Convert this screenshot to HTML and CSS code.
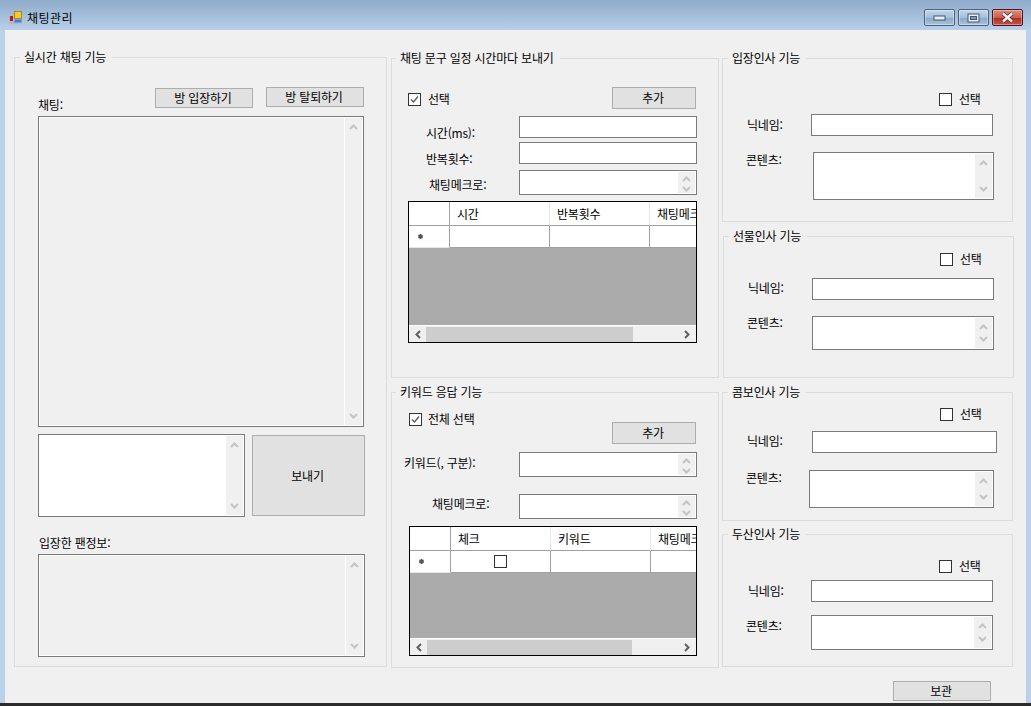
FILE: index.html
```html
<!DOCTYPE html>
<html lang="ko">
<head>
    <meta charset="UTF-8">
    <title>채팅관리</title>
    <link rel="stylesheet" href="styles.css">
</head>
<body>
<div class="window">
    <div class="titlebar">
        <svg class="app-icon" width="13" height="13" viewBox="0 0 13 13">
            <rect x="0" y="3" width="13" height="10" fill="#b4b9c4"/>
            <rect x="1" y="5" width="3" height="5" fill="#b0201c"/>
            <rect x="5" y="0" width="8" height="8" fill="#a88b20"/>
            <rect x="6" y="1" width="6" height="6" fill="#f6c92e"/>
            <rect x="5" y="8" width="8" height="4" fill="#7f9fd0"/>
            <rect x="6" y="9" width="6" height="2" fill="#3d7fe0"/>
        </svg>
        <span class="title">채팅관리</span>
        <div class="win-buttons">
            <div class="win-btn">
                <svg width="13" height="6" viewBox="0 0 13 6"><rect x="1" y="1" width="11" height="4" fill="#e8eef5" stroke="#46566c"/></svg>
            </div>
            <div class="win-btn">
                <svg width="13" height="10" viewBox="0 0 13 10"><rect x="1" y="1" width="11" height="8" fill="#e8eef5" stroke="#46566c"/><rect x="3.5" y="3.5" width="6" height="3" fill="#7f9ab8" stroke="#46566c"/></svg>
            </div>
            <div class="win-btn win-close">
                <svg width="15" height="11" viewBox="0 0 15 11"><path d="M3 1.5L12 9.5M12 1.5L3 9.5" stroke="#5a2a2a" stroke-width="4"/><path d="M3 1.5L12 9.5M12 1.5L3 9.5" stroke="#f2f2f2" stroke-width="2.4"/></svg>
            </div>
        </div>
    </div>

    <div class="client">
        <!-- 왼쪽: 실시간 채팅 -->
        <div class="col col-left">
            <section class="group group-chat">
                <span class="legend">실시간 채팅 기능</span>
                <div class="chat-head">
                    <label class="chat-label">채팅:</label>
                    <button class="btn btn-enter">방 입장하기</button>
                    <button class="btn btn-leave">방 탈퇴하기</button>
                </div>
                <div class="box off chat-log">
                    <div class="fill"></div>
                    <div class="vbar">
                        <svg width="9" height="6" viewBox="0 0 9 6"><path d="M1 5L4.5 1.5L8 5"/></svg>
                        <svg width="9" height="6" viewBox="0 0 9 6"><path d="M1 1L4.5 4.5L8 1"/></svg>
                    </div>
                </div>
                <div class="chat-send">
                    <div class="box chat-input">
                        <div class="fill"></div>
                        <div class="vbar">
                            <svg width="9" height="6" viewBox="0 0 9 6"><path d="M1 5L4.5 1.5L8 5"/></svg>
                            <svg width="9" height="6" viewBox="0 0 9 6"><path d="M1 1L4.5 4.5L8 1"/></svg>
                        </div>
                    </div>
                    <button class="btn btn-send">보내기</button>
                </div>
                <label class="fan-label">입장한 팬정보:</label>
                <div class="box off fan-log">
                    <div class="fill"></div>
                    <div class="vbar">
                        <svg width="9" height="6" viewBox="0 0 9 6"><path d="M1 5L4.5 1.5L8 5"/></svg>
                        <svg width="9" height="6" viewBox="0 0 9 6"><path d="M1 1L4.5 4.5L8 1"/></svg>
                    </div>
                </div>
            </section>
        </div>

        <!-- 가운데: 매크로 / 키워드 -->
        <div class="col col-mid">
            <section class="group group-timer">
                <span class="legend">채팅 문구 일정 시간마다 보내기</span>
                <div class="top-row">
                    <div class="check-field"><span class="check"><svg width="11" height="11" viewBox="0 0 11 11"><path d="M2 5.5L4.5 8L9 2.5"/></svg></span>선택</div>
                    <button class="btn btn-add">추가</button>
                </div>
                <div class="field f-time">
                    <label>시간(ms):</label>
                    <input class="ctl" type="text">
                </div>
                <div class="field f-repeat">
                    <label>반복횟수:</label>
                    <input class="ctl" type="text">
                </div>
                <div class="field f-macro">
                    <label>채팅메크로:</label>
                    <div class="box ctl">
                        <div class="fill"></div>
                        <div class="vbar mini">
                            <svg width="9" height="6" viewBox="0 0 9 6"><path d="M1 5L4.5 1.5L8 5"/></svg>
                            <svg width="9" height="6" viewBox="0 0 9 6"><path d="M1 1L4.5 4.5L8 1"/></svg>
                        </div>
                    </div>
                </div>
                <div class="datagrid grid-timer">
                    <table>
                        <tr class="head"><th></th><th>시간</th><th>반복횟수</th><th>채팅메크로</th></tr>
                        <tr><td class="row-head"><svg width="7" height="7" viewBox="0 0 7 7"><circle cx="3.5" cy="3.5" r="2.2"/><path d="M3.5 1V6M1.3 2.2L5.7 4.8M1.3 4.8L5.7 2.2"/></svg></td><td></td><td></td><td></td></tr>
                    </table>
                    <div class="grid-empty"></div>
                    <div class="hbar">
                        <svg width="9" height="9" viewBox="0 0 9 9"><path d="M6 1L2.5 4.5L6 8"/></svg>
                        <div class="thumb thumb-timer"></div>
                        <svg width="9" height="9" viewBox="0 0 9 9"><path d="M3 1L6.5 4.5L3 8"/></svg>
                    </div>
                </div>
            </section>

            <section class="group group-keyword">
                <span class="legend">키워드 응답 기능</span>
                <div class="top-row">
                    <div class="check-field"><span class="check"><svg width="11" height="11" viewBox="0 0 11 11"><path d="M2 5.5L4.5 8L9 2.5"/></svg></span>전체 선택</div>
                    <button class="btn btn-add">추가</button>
                </div>
                <div class="field f-keyword">
                    <label>키워드(, 구분):</label>
                    <div class="box ctl">
                        <div class="fill"></div>
                        <div class="vbar mini">
                            <svg width="9" height="6" viewBox="0 0 9 6"><path d="M1 5L4.5 1.5L8 5"/></svg>
                            <svg width="9" height="6" viewBox="0 0 9 6"><path d="M1 1L4.5 4.5L8 1"/></svg>
                        </div>
                    </div>
                </div>
                <div class="field f-kmacro">
                    <label>채팅메크로:</label>
                    <div class="box ctl">
                        <div class="fill"></div>
                        <div class="vbar mini">
                            <svg width="9" height="6" viewBox="0 0 9 6"><path d="M1 5L4.5 1.5L8 5"/></svg>
                            <svg width="9" height="6" viewBox="0 0 9 6"><path d="M1 1L4.5 4.5L8 1"/></svg>
                        </div>
                    </div>
                </div>
                <div class="datagrid grid-keyword">
                    <table>
                        <tr class="head"><th></th><th>체크</th><th>키워드</th><th>채팅메크로</th></tr>
                        <tr><td class="row-head"><svg width="7" height="7" viewBox="0 0 7 7"><circle cx="3.5" cy="3.5" r="2.2"/><path d="M3.5 1V6M1.3 2.2L5.7 4.8M1.3 4.8L5.7 2.2"/></svg></td><td class="center"><span class="check cell-check"></span></td><td></td><td></td></tr>
                    </table>
                    <div class="grid-empty"></div>
                    <div class="hbar">
                        <svg width="9" height="9" viewBox="0 0 9 9"><path d="M6 1L2.5 4.5L6 8"/></svg>
                        <div class="thumb thumb-keyword"></div>
                        <svg width="9" height="9" viewBox="0 0 9 9"><path d="M3 1L6.5 4.5L3 8"/></svg>
                    </div>
                </div>
            </section>
        </div>

        <!-- 오른쪽: 인사 기능 -->
        <div class="col col-right">
            <section class="group greet greet-enter">
                <span class="legend">입장인사 기능</span>
                <div class="check-field greet-check"><span class="check"></span>선택</div>
                <div class="field f-nick">
                    <label>닉네임:</label>
                    <input class="ctl" type="text">
                </div>
                <div class="field f-body">
                    <label>콘텐츠:</label>
                    <div class="box ctl">
                        <div class="fill"></div>
                        <div class="vbar">
                            <svg width="9" height="6" viewBox="0 0 9 6"><path d="M1 5L4.5 1.5L8 5"/></svg>
                            <svg width="9" height="6" viewBox="0 0 9 6"><path d="M1 1L4.5 4.5L8 1"/></svg>
                        </div>
                    </div>
                </div>
            </section>

            <section class="group greet greet-gift">
                <span class="legend">선물인사 기능</span>
                <div class="check-field greet-check"><span class="check"></span>선택</div>
                <div class="field f-nick">
                    <label>닉네임:</label>
                    <input class="ctl" type="text">
                </div>
                <div class="field f-body">
                    <label>콘텐츠:</label>
                    <div class="box ctl">
                        <div class="fill"></div>
                        <div class="vbar">
                            <svg width="9" height="6" viewBox="0 0 9 6"><path d="M1 5L4.5 1.5L8 5"/></svg>
                            <svg width="9" height="6" viewBox="0 0 9 6"><path d="M1 1L4.5 4.5L8 1"/></svg>
                        </div>
                    </div>
                </div>
            </section>

            <section class="group greet greet-combo">
                <span class="legend">콤보인사 기능</span>
                <div class="check-field greet-check"><span class="check"></span>선택</div>
                <div class="field f-nick">
                    <label>닉네임:</label>
                    <input class="ctl" type="text">
                </div>
                <div class="field f-body">
                    <label>콘텐츠:</label>
                    <div class="box ctl">
                        <div class="fill"></div>
                        <div class="vbar">
                            <svg width="9" height="6" viewBox="0 0 9 6"><path d="M1 5L4.5 1.5L8 5"/></svg>
                            <svg width="9" height="6" viewBox="0 0 9 6"><path d="M1 1L4.5 4.5L8 1"/></svg>
                        </div>
                    </div>
                </div>
            </section>

            <section class="group greet greet-doosan">
                <span class="legend">두산인사 기능</span>
                <div class="check-field greet-check"><span class="check"></span>선택</div>
                <div class="field f-nick">
                    <label>닉네임:</label>
                    <input class="ctl" type="text">
                </div>
                <div class="field f-body">
                    <label>콘텐츠:</label>
                    <div class="box ctl">
                        <div class="fill"></div>
                        <div class="vbar">
                            <svg width="9" height="6" viewBox="0 0 9 6"><path d="M1 5L4.5 1.5L8 5"/></svg>
                            <svg width="9" height="6" viewBox="0 0 9 6"><path d="M1 1L4.5 4.5L8 1"/></svg>
                        </div>
                    </div>
                </div>
            </section>

            <button class="btn btn-save">보관</button>
        </div>
    </div>
</div>
</body>
</html>
```
FILE: styles.css
```css
html, body {
    margin: 0;
    height: 100%;
    overflow: hidden;
    background-color: #2b2b2b;
}
body {
    font-family: "Noto Sans CJK KR", "Liberation Sans", sans-serif;
    font-size: 12px;
    line-height: 16px;
    letter-spacing: -.2px;
    color: #000;
}
.window {
    height: 703px;
    display: flex;
    flex-direction: column;
    background-color: #b9d1ea;
}

/* title bar */
.titlebar {
    height: 30px;
    flex: none;
    display: flex;
    align-items: flex-start;
    background: linear-gradient(#8fabcb, #b8d0ea);
}
.app-icon {
    margin: 11px 0 0 9px;
}
.title {
    margin: 10px 0 0 5px;
    letter-spacing: .5px;
}
.win-buttons {
    margin: 9px 8px 0 auto;
    display: flex;
    gap: 3px;
}
.win-btn {
    width: 29px;
    height: 15px;
    border: 1px solid #4f6079;
    border-radius: 2px;
    display: flex;
    align-items: center;
    justify-content: center;
    background: linear-gradient(#c3d6ea, #a5bfdb 50%, #8ba9c9 55%, #a9c3de);
    box-shadow: inset 0 0 0 1px rgba(255, 255, 255, .35);
}
.win-close {
    border-color: #4b1420;
    background: linear-gradient(#dc8b7e, #c8604f 50%, #ae2f20 55%, #c5564a);
}

/* layout */
.client {
    flex: 1;
    margin: 0 5px;
    display: flex;
    align-items: flex-start;
    background-color: #f0f0f0;
}
.col {
    flex: none;
    display: flex;
    flex-direction: column;
    align-items: flex-start;
}
.col-left {
    width: 373px;
    margin: 27px 0 0 9px;
}
.col-mid {
    width: 328px;
    margin: 28px 0 0 4px;
    gap: 14px;
}
.col-right {
    width: 292px;
    margin: 28px 0 0 3px;
}

.group {
    position: relative;
    box-sizing: border-box;
    flex: none;
    width: 100%;
    border: 1px solid #dcdcdc;
}
.legend {
    position: absolute;
    top: -9px;
    left: 5px;
    padding: 0 6px 0 4px;
    background-color: #f0f0f0;
    white-space: nowrap;
}
.group-chat { height: 610px; }
.group-timer { height: 320px; }
.group-keyword { height: 276px; }
.group-timer .legend, .group-keyword .legend { left: 4px; }

/* controls */
.btn {
    box-sizing: border-box;
    flex: none;
    margin: 0;
    padding: 0 2px 0 0;
    width: 98px;
    height: 20px;
    font: inherit;
    letter-spacing: inherit;
    color: #000;
    background-color: #e1e1e1;
    border: 1px solid #adadad;
}
input.ctl {
    display: block;
    box-sizing: border-box;
    margin: 0;
    padding: 0;
    background-color: #fff;
    border: 1px solid #7a7a7a;
    border-radius: 0;
}
.box {
    box-sizing: border-box;
    flex: none;
    display: flex;
    padding: 1px;
    background-color: #fff;
    border: 1px solid #7a7a7a;
}
.fill {
    flex: 1;
}
.box.off .fill {
    background-color: #f0f0f0;
}
.box.off .vbar {
    margin-left: 1px;
}
.vbar {
    flex: none;
    width: 17px;
    box-sizing: border-box;
    display: flex;
    flex-direction: column;
    align-items: center;
    justify-content: space-between;
    padding: 6px 0;
    background-color: #f0f0f0;
}
.vbar.mini {
    padding: 4px 0 1px;
}
.vbar svg path {
    fill: none;
    stroke: #c4c4c4;
    stroke-width: 2;
}
.check {
    box-sizing: border-box;
    flex: none;
    display: inline-block;
    width: 13px;
    height: 13px;
    background-color: #fff;
    border: 1px solid #333;
}
.check svg {
    display: block;
}
.check path {
    fill: none;
    stroke: #555;
    stroke-width: 1.2;
}
.check-field {
    display: flex;
    align-items: center;
    gap: 7px;
    white-space: nowrap;
}

/* label + control rows, each place set by the row class */
.field {
    display: flex;
    align-items: flex-start;
    margin-top: var(--top);
    padding-left: var(--lab-left);
}
.field label {
    flex: none;
    width: calc(var(--ctl-left) - var(--lab-left));
    margin-top: var(--lab-top);
    white-space: nowrap;
}
.field .ctl {
    flex: none;
    width: var(--ctl-w);
    height: var(--ctl-h);
}

/* chat */
.chat-head {
    display: flex;
    align-items: flex-start;
    width: 326px;
    height: 29px;
    margin: 29px 0 0 23px;
}
.chat-label {
    margin-top: 10px;
}
.btn-enter {
    margin: 1px 0 0 auto;
}
.btn-leave {
    margin-left: 13px;
}
.chat-log {
    width: 326px;
    height: 311px;
    margin-left: 23px;
}
.chat-send {
    display: flex;
    align-items: flex-start;
    margin: 7px 0 0 23px;
}
.chat-input {
    width: 207px;
    height: 83px;
}
.btn-send {
    width: 113px;
    height: 81px;
    margin: 1px 0 0 7px;
}
.fan-label {
    display: block;
    margin: 18px 0 0 24px;
}
.fan-log {
    width: 327px;
    height: 103px;
    margin: 3px 0 0 23px;
}

/* macro and keyword */
.top-row {
    display: flex;
    align-items: flex-start;
    padding-right: 22px;
}
.btn-add {
    width: 84px;
    height: 22px;
    margin-left: auto;
}
.group-timer .top-row { padding-left: 16px; }
.group-timer .check-field { margin-top: 32px; }
.group-timer .btn-add { margin-top: 28px; }
.group-keyword .top-row { padding-left: 17px; }
.group-keyword .check-field { margin-top: 18px; gap: 6px; }
.group-keyword .btn-add { margin-top: 29px; }

.f-time, .f-repeat, .f-macro, .f-keyword, .f-kmacro {
    --ctl-left: 127px;
    --ctl-w: 178px;
    --ctl-h: 22px;
}
.f-time { --top: 7px; --lab-left: 34px; --lab-top: 9px; }
.f-repeat { --top: 1px; --lab-left: 34px; --lab-top: 9px; }
.f-macro { --top: 3px; --lab-left: 37px; --lab-top: 7px; --ctl-h: 25px; }
.f-keyword { --top: 8px; --lab-left: 12px; --lab-top: 3px; --ctl-h: 25px; }
.f-kmacro { --top: 17px; --lab-left: 40px; --lab-top: 2px; --ctl-h: 25px; }

/* data grid */
.datagrid {
    box-sizing: border-box;
    display: flex;
    flex-direction: column;
    overflow: hidden;
    background-color: #ababab;
    border: 1px solid #000;
}
.grid-timer {
    width: 289px;
    height: 142px;
    margin: 6px 0 0 16px;
}
.grid-keyword {
    width: 288px;
    height: 130px;
    margin: 7px 0 0 17px;
}
.datagrid table {
    flex: none;
    width: 341px;
    table-layout: fixed;
    border-collapse: separate;
    border-spacing: 0;
    background-color: #fff;
}
.datagrid th, .datagrid td {
    box-sizing: border-box;
    width: 100px;
    padding: 0;
    border-right: 1px solid #a0a0a0;
    border-bottom: 1px solid #a0a0a0;
    overflow: hidden;
    white-space: nowrap;
}
.datagrid th:first-child, .datagrid td:first-child {
    width: 41px;
}
.datagrid th {
    height: 24px;
    padding-left: 7px;
    font-weight: normal;
    text-align: left;
    border-right-color: #e6e6e6;
}
.datagrid th:first-child {
    border-right-color: #a0a0a0;
}
.datagrid td {
    height: 22px;
}
.datagrid td.row-head {
    padding-left: 8px;
    border-bottom-color: #e6e6e6;
}
.row-head svg {
    display: block;
}
.row-head path {
    fill: none;
    stroke: #555;
    stroke-width: 1;
}
.row-head circle {
    fill: #555;
}
.center {
    text-align: center;
}
.cell-check {
    display: block;
    margin: 0 auto;
}
.grid-empty {
    flex: 1;
}
.hbar {
    flex: none;
    box-sizing: border-box;
    height: 17px;
    display: flex;
    align-items: center;
    padding: 0 5px;
    background-color: #f0f0f0;
    border-top: 1px solid #fff;
}
.hbar svg {
    flex: none;
}
.hbar svg:last-child {
    margin-left: auto;
}
.hbar path {
    fill: none;
    stroke: #606060;
    stroke-width: 2;
}
.thumb {
    height: 15px;
    margin-left: 3px;
    background-color: #cdcdcd;
}
.thumb-timer { width: 207px; }
.thumb-keyword { width: 205px; }

/* greeting boxes */
.greet-check {
    margin: var(--check-top) 0 0 var(--check-left);
}
.f-nick {
    --ctl-h: 22px;
}
.greet-enter {
    height: 164px;
    margin-bottom: 14px;
    width: 291px;
    --check-left: 216px;
    --check-top: 32px;
}
.greet-enter .f-nick { --top: 7px; --lab-left: 24px; --ctl-left: 88px; --lab-top: 3px; --ctl-w: 182px; }
.greet-enter .f-body { --top: 16px; --lab-left: 23px; --ctl-left: 90px; --lab-top: 0px; --ctl-w: 181px; --ctl-h: 48px; }
.greet-gift {
    height: 142px;
    margin: 0 0 14px 1px;
    width: 291px;
    --check-left: 216px;
    --check-top: 14px;
}
.greet-gift .f-nick { --top: 11px; --lab-left: 24px; --ctl-left: 88px; --lab-top: 2px; --ctl-w: 182px; }
.greet-gift .f-body { --top: 16px; --lab-left: 23px; --ctl-left: 88px; --lab-top: -1px; --ctl-w: 182px; --ctl-h: 34px; }
.greet-combo {
    height: 129px;
    margin-bottom: 13px;
    width: 291px;
    --check-left: 217px;
    --check-top: 13px;
}
.greet-combo .f-nick { --top: 9px; --lab-left: 24px; --ctl-left: 89px; --lab-top: 2px; --ctl-w: 185px; }
.greet-combo .f-body { --top: 17px; --lab-left: 23px; --ctl-left: 86px; --lab-top: 0px; --ctl-w: 185px; --ctl-h: 38px; }
.greet-doosan {
    height: 133px;
    width: 291px;
    --check-left: 216px;
    --check-top: 23px;
}
.greet-doosan .f-nick { --top: 6px; --lab-left: 25px; --ctl-left: 88px; --lab-top: 3px; --ctl-w: 182px; }
.greet-doosan .f-body { --top: 13px; --lab-left: 23px; --ctl-left: 88px; --lab-top: 3px; --ctl-w: 182px; --ctl-h: 35px; }
.btn-save {
    margin: 14px 0 0 171px;
}
```
